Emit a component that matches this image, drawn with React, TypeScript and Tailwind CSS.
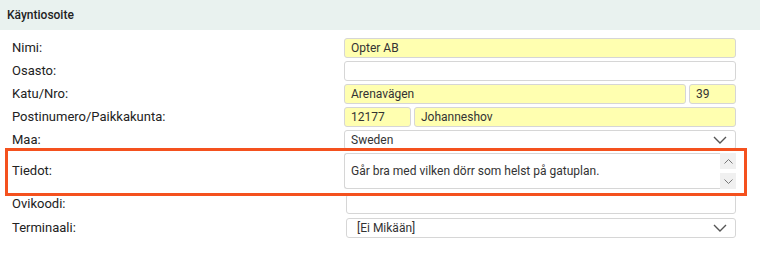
import React from "react";

const font = { fontFamily: "Roboto, 'Liberation Sans', sans-serif" };

function Chevron() {
  return (
    <svg width="14" height="8" viewBox="0 0 14 8" className="shrink-0">
      <polyline points="1,1 7,7 13,1" fill="none" stroke="#555" strokeWidth="1.4" />
    </svg>
  );
}

function Input({ value, yellow, className = "" }: { value?: string; yellow?: boolean; className?: string }) {
  return (
    <div
      className={`h-[20px] rounded-[3px] border border-[#d6d6d6] flex items-center px-[6px] text-[12px] text-[#333] ${
        yellow ? "bg-[#ffffb0]" : "bg-white"
      } ${className}`}
    >
      {value}
    </div>
  );
}

function Select({ value, className = "", pad = "pl-[6px]" }: { value: string; className?: string; pad?: string }) {
  return (
    <div
      className={`h-[20px] rounded-[3px] border border-[#d6d6d6] bg-white flex items-center justify-between ${pad} pr-[8px] text-[12px] text-[#333] ${className}`}
    >
      <span>{value}</span>
      <Chevron />
    </div>
  );
}

function Row({ label, children, className = "" }: { label: string; children: React.ReactNode; className?: string }) {
  return (
    <div className={`flex items-center ${className}`}>
      <div className="w-[344px] shrink-0 pl-[12px] text-[13px] text-[#222]">{label}</div>
      <div className="w-[392px] flex">{children}</div>
    </div>
  );
}

export default function App() {
  return (
    <div className="relative w-[760px] h-[253px] bg-white" style={font}>
      <div className="h-[30px] bg-[#e9f2ef] flex items-center px-[7px] text-[12px] font-medium text-[#222]">
        Käyntiosoite
      </div>
      <div className="flex flex-col pt-[8px]">
        <Row label="Nimi:">
          <Input value="Opter AB" yellow className="w-full" />
        </Row>
        <Row label="Osasto:" className="mt-[3px]">
          <Input className="w-full" />
        </Row>
        <Row label="Katu/Nro:" className="mt-[3px]">
          <Input value="Arenavägen" yellow className="flex-1" />
          <Input value="39" yellow className="w-[47px] ml-[3px]" />
        </Row>
        <Row label="Postinumero/Paikkakunta:" className="mt-[3px]">
          <Input value="12177" yellow className="w-[67px]" />
          <Input value="Johanneshov" yellow className="flex-1 ml-[3px]" />
        </Row>
        <Row label="Maa:" className="mt-[3px]">
          <Select value="Sweden" className="w-full" />
        </Row>
        <Row label="Tiedot:" className="mt-[3px]">
          <div className="w-full h-[36px] flex">
            <div className="flex-1 rounded-l-[3px] border-l border-t border-b border-[#d6d6d6] flex items-center px-[6px] text-[12px] text-[#333]">
              Går bra med vilken dörr som helst på gatuplan.
            </div>
            <div className="w-[16px] flex flex-col justify-between bg-white">
              <div className="h-[16px] bg-[#f0f0f0] flex items-center justify-center">
                <svg width="9" height="5" viewBox="0 0 9 5">
                  <polyline points="0.5,4.5 4.5,0.5 8.5,4.5" fill="none" stroke="#777" strokeWidth="1" />
                </svg>
              </div>
              <div className="h-[16px] bg-[#f0f0f0] flex items-center justify-center">
                <svg width="9" height="5" viewBox="0 0 9 5">
                  <polyline points="0.5,0.5 4.5,4.5 8.5,0.5" fill="none" stroke="#777" strokeWidth="1" />
                </svg>
              </div>
            </div>
          </div>
        </Row>
        <Row label="Ovikoodi:" className="mt-[5px]">
          <Input className="w-[390px] ml-[2px]" />
        </Row>
        <Row label="Terminaali:" className="mt-[4px]">
          <Select value="[Ei Mikään]" pad="pl-[10px]" className="w-[390px] ml-[2px]" />
        </Row>
      </div>
      <div className="absolute left-[5px] top-[148px] w-[742px] h-[48px] border-[3px] border-[#f4511e]" />
    </div>
  );
}
